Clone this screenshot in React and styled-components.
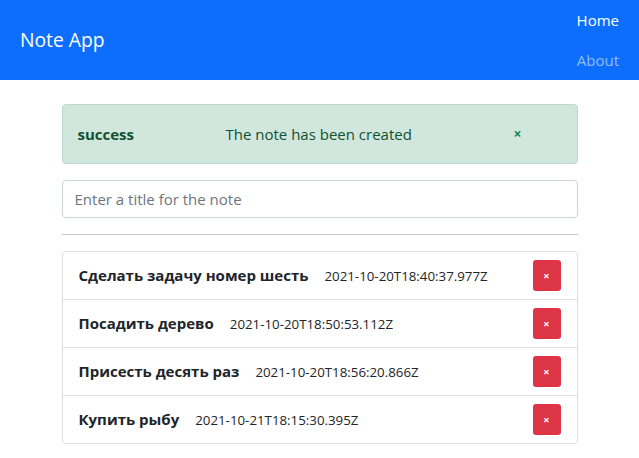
import React from 'react';
import styled, { createGlobalStyle } from 'styled-components';

const GlobalStyle = createGlobalStyle`
  body {
    margin: 0;
    font-family: "Open Sans", "Noto Sans", sans-serif;
    font-size: 15px;
    line-height: 24px;
    color: #212529;
    background: #fff;
  }
  * { box-sizing: border-box; }
`;

const Navbar = styled.nav`
  display: flex;
  align-items: center;
  justify-content: space-between;
  background: #0d6efd;
  padding: 0 20px;
`;

const Brand = styled.div`
  color: #fff;
  font-size: 19.3px;
  line-height: 30px;
`;

const NavList = styled.ul`
  list-style: none;
  margin: 0;
  padding: 0;
  display: flex;
  flex-direction: column;
  align-items: flex-end;
`;

const NavLink = styled.li`
  padding: 8px 0;
  line-height: 24px;
  color: ${props => (props.active ? '#fff' : 'rgba(255,255,255,0.55)')};
`;

const Container = styled.main`
  width: 516px;
  margin: 24px auto 0;
`;

const Alert = styled.div`
  display: flex;
  align-items: center;
  background: #d1e7dd;
  border: 1px solid #badbcc;
  border-radius: 4px;
  color: #0f5132;
  padding: 16px 15px;
  margin-bottom: 16px;
  height: 60px;
`;

const AlertTitle = styled.strong`
  font-weight: 700;
  width: 148px;
`;

const AlertText = styled.span`
  width: 288px;
`;

const Close = styled.span`
  color: #198754;
  font-size: 14px;
  font-weight: 700;
`;

const Input = styled.input`
  display: block;
  width: 100%;
  height: 38px;
  padding: 6px 12px;
  font: inherit;
  color: #212529;
  border: 1px solid #ced4da;
  border-radius: 4px;
  &::placeholder { color: #6c757d; }
`;

const Divider = styled.hr`
  margin: 16px 0;
  border: 0;
  border-top: 1px solid #c6c6c6;
`;

const List = styled.ul`
  list-style: none;
  margin: 0;
  padding: 0;
  border: 1px solid #dfdfdf;
  border-radius: 4px;
`;

const Item = styled.li`
  display: flex;
  align-items: center;
  justify-content: space-between;
  padding: 8px 16px;
  border-top: ${props => (props.first ? 'none' : '1px solid #dfdfdf')};
`;

const ItemText = styled.div`
  display: flex;
  align-items: baseline;
  gap: 16px;
`;

const Title = styled.strong`
  font-weight: 700;
`;

const Date = styled.small`
  font-size: 13.3px;
`;

const DeleteButton = styled.button`
  width: 28px;
  height: 31px;
  border: none;
  border-radius: 3px;
  background: #dc3545;
  color: #fff;
  font-size: 11px;
  font-weight: 700;
  font-family: inherit;
  padding: 0;
`;

const notes = [
  { title: 'Сделать задачу номер шесть', date: '2021-10-20T18:40:37.977Z' },
  { title: 'Посадить дерево', date: '2021-10-20T18:50:53.112Z' },
  { title: 'Присесть десять раз', date: '2021-10-20T18:56:20.866Z' },
  { title: 'Купить рыбу', date: '2021-10-21T18:15:30.395Z' },
];

export default function App() {
  return (
    <>
      <GlobalStyle />
      <Navbar>
        <Brand>Note App</Brand>
        <NavList>
          <NavLink active>Home</NavLink>
          <NavLink>About</NavLink>
        </NavList>
      </Navbar>
      <Container>
        <Alert>
          <AlertTitle>success</AlertTitle>
          <AlertText>The note has been created</AlertText>
          <Close>×</Close>
        </Alert>
        <Input placeholder="Enter a title for the note" />
        <Divider />
        <List>
          {notes.map((n, i) => (
            <Item key={n.date} first={i === 0}>
              <ItemText>
                <Title>{n.title}</Title>
                <Date>{n.date}</Date>
              </ItemText>
              <DeleteButton>×</DeleteButton>
            </Item>
          ))}
        </List>
      </Container>
    </>
  );
}
